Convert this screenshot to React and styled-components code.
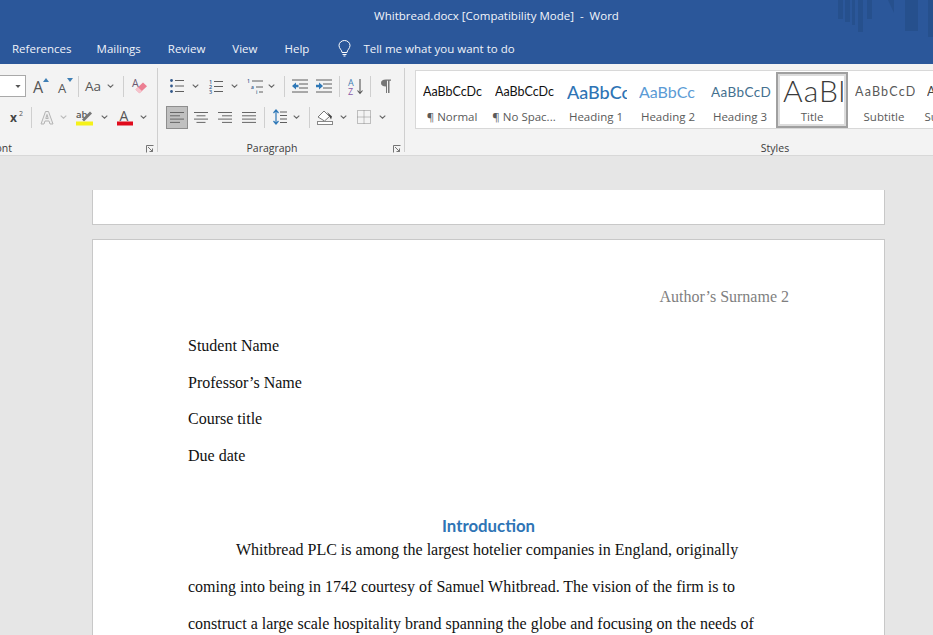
import React from "react";
import styled, { createGlobalStyle } from "styled-components";

const Global = createGlobalStyle`
  html, body { margin: 0; padding: 0; width: 933px; height: 635px; overflow: hidden; background: #e6e6e6; }
  #root { width: 933px; height: 635px; overflow: hidden; }
  * { box-sizing: border-box; }
`;
const Shell = styled.div`
  width: 933px; height: 635px; overflow: hidden; display: flex; flex-direction: column;
  font-family: "Open Sans", "Noto Sans", sans-serif;
`;
const TitleBar = styled.div`
  position: relative; height: 33px; flex: none; background: #2b579a; color: #f2f5fa;
  display: flex; justify-content: center; align-items: center; font-size: 11.5px; padding: 0 0 2px 60px;
  white-space: pre;
`;
const Streaks = styled.svg`
  position: absolute; right: 0; top: 0; width: 95px; height: 38px; z-index: 2;
`;
const TabBar = styled.div`
  height: 31px; flex: none; background: #2b579a; color: #f0f3f9; display: flex; align-items: center;
  padding: 0 0 0 12px; font-size: 11.5px;
`;
const Tab = styled.span`
  margin-right: ${p => p.$mr}px; white-space: nowrap;
`;
const Ribbon = styled.div`
  height: 92px; flex: none; display: flex; overflow: hidden; background: #f3f3f3;
  border-bottom: 1px solid #d8d8d8; padding-top: 4px; color: #444;
`;
const Group = styled.div`
  flex: none; width: ${p => p.$w}px; height: 84px; padding-top: ${p => (p.$plain ? 0 : 6)}px; display: flex; flex-direction: column;
  border-right: ${p => (p.$plain ? "none" : "1px solid #cfcfcf")};
`;
const Row = styled.div`
  display: flex; align-items: center; height: 24px; margin-bottom: ${p => p.$mb || 0}px; flex: none;
`;
const Tool = styled.div`
  flex: none; margin-left: ${p => p.$ml || 0}px; width: ${p => p.$w}px; height: 24px;
  display: flex; align-items: center; justify-content: center;
  svg { display: block; overflow: visible; }
  font-family: "Open Sans", sans-serif;
`;
const Sep = styled.div`
  flex: none; margin-left: ${p => p.$ml}px; width: 1px; height: 21px; background: #cfcfcf;
`;
const Combo = styled.div`
  flex: none; width: 26px; height: 22px; background: #fff; border: 1px solid #a9a9a9; border-left: none;
  display: flex; align-items: center; justify-content: flex-end; padding-right: 4px;
`;
const ActiveTool = styled(Tool)`
  background: #c0c0c0; border: 1px solid #8e8e8e; height: 23px; width: 22px;
`;
const LabelRow = styled.div`
  margin-top: 14px; height: 10px; position: relative; display: flex; align-items: center; justify-content: ${p => p.$align || "center"};
  padding-right: ${p => p.$pr || 0}px;
  font-size: 10.5px; color: #3c3c3c; flex: none; white-space: nowrap;
`;
const FontLabel = styled.span`
  margin-left: -10px;
`;
const Launcher = styled.svg`
  position: absolute; right: 3px; top: 2px; width: 8px; height: 8px;
`;
const Gallery = styled.div`
  margin: 2px 0 0 10px; height: 59px; width: 730px; flex: none; background: #fff; border: 1px solid #d8d8d8;
  border-right: none; display: flex; padding-top: 1px;
`;
const StyleItem = styled.div`
  flex: none; width: 72px; height: 56px; padding: 3px 4px 0 6px; display: flex; flex-direction: column; align-items: center;
  overflow: hidden;
  ${p => p.$on && `border: 2px solid #a0a0a0; box-shadow: inset 0 0 0 2px #dcdcdc; padding: 1px 2px 0 4px;`}
`;
const Preview = styled.div`
  width: 60px; height: 33px; overflow: hidden; white-space: nowrap; display: flex; align-items: center;
  padding-bottom: ${p => p.$pb || 0}px;
  font-family: Lato, "Open Sans", sans-serif; font-size: ${p => p.$size}px; font-weight: ${p => p.$weight || 400};
  color: ${p => p.$color}; letter-spacing: ${p => p.$ls || 0}px;
`;
const StyleName = styled.div`
  font-size: 11.5px; color: #5a5a5a; height: 17px; line-height: 17px; white-space: nowrap; margin-left: -2px;
`;
const DocArea = styled.div`
  flex: 1; background: #e6e6e6; padding: 34px 0 0 92px; overflow: hidden;
`;
const PageEnd = styled.div`
  width: 793px; height: 35px; background: #fff; border: 1px solid #c8c8c8; border-top: none;
`;
const Page = styled.div`
  margin-top: 14px; width: 793px; height: 800px; background: #fff; border: 1px solid #c8c8c8; padding: 47px 95px 0 95px;
  font-family: "Liberation Serif", "Times New Roman", serif; font-size: 16px; color: #111;
`;
const RunHeader = styled.div`
  text-align: right; color: #7f7f7f; line-height: 20px; margin-bottom: 21px;
`;
const Line = styled.div`
  line-height: 36.67px; white-space: nowrap;
`;
const Heading = styled.div`
  margin-top: 45.5px; line-height: 12px; text-align: center; font-family: Lato, sans-serif; font-weight: 700; font-size: 16.8px; color: #2e74b5; white-space: nowrap;
`;
const Indented = styled(Line)`
  text-indent: 48px;
`;

const Chev = () => (
  <svg width="7" height="4" viewBox="0 0 7 4"><path d="M.7.6 3.5 3.2 6.3.6" fill="none" stroke="#666" strokeWidth="1.1" /></svg>
);
const L = ({ x1, x2, y, c = "#5f5f5f" }) => <line x1={x1} x2={x2} y1={y} y2={y} stroke={c} strokeWidth="1" />;
const Lines = ({ kind }) => {
  const r = {
    left: [[0, 14], [0, 10], [0, 14], [0, 10]],
    center: [[0, 14], [2.5, 11.5], [0, 14], [2.5, 11.5]],
    right: [[0, 14], [4, 14], [0, 14], [4, 14]],
    just: [[0, 14], [0, 14], [0, 14], [0, 14]],
  }[kind];
  return (
    <svg width="14" height="13" viewBox="0 0 14 13">
      {r.map((s, i) => <L key={i} x1={s[0]} x2={s[1]} y={1.5 + i * 3.3} c="#666" />)}
    </svg>
  );
};
const SvgT = ({ x, y, s, c = "#555", w = 400, f = "Open Sans", children }) => (
  <text x={x} y={y} fontSize={s} fill={c} fontWeight={w} fontFamily={f}>{children}</text>
);

const Launch = () => (
  <Launcher viewBox="0 0 8 8">
    <path d="M.5 7.500V.5H7.500M2 2 6.500 6.500M6.500 3.500V6.500H3.500" fill="none" stroke="#666" strokeWidth=".9" />
  </Launcher>
);

const styleItems = [
  { prev: "AaBbCcDc", size: 12.5, color: "#111", name: "¶ Normal" },
  { prev: "AaBbCcDc", size: 12.5, color: "#111", name: "¶ No Spac..." },
  { prev: "AaBbCc", size: 18, color: "#2e74b5", weight: 500, name: "Heading 1" },
  { prev: "AaBbCc", size: 16, color: "#5b9bd5", name: "Heading 2" },
  { prev: "AaBbCcD", size: 13.5, color: "#44708f", ls: 0.4, name: "Heading 3" },
  { prev: "AaBl", size: 30, color: "#3a3a3a", weight: 300, ls: 1, pb: 4, name: "Title", on: true },
  { prev: "AaBbCcD", size: 12.5, color: "#595959", ls: 1.2, name: "Subtitle" },
  { prev: "AaBbCcD", size: 12.5, color: "#444", name: "Subtle Em..." },
];

export default function App() {
  return (
    <Shell>
      <Global />
      <TitleBar>
        Whitbread.docx [Compatibility Mode]  -  Word
        <Streaks viewBox="0 0 95 38">
          <g fill="#21487f" opacity=".45">
            <rect x="0" y="0" width="5" height="19" />
            <rect x="7" y="0" width="5" height="22" />
            <rect x="14" y="0" width="3" height="25" />
            <rect x="20" y="0" width="5" height="32" />
            <rect x="29" y="0" width="5" height="19" />
            <path d="M50 0h6v13z" />
            <rect x="67" y="0" width="13" height="31" />
            <rect x="90" y="0" width="5" height="37" />
          </g>
        </Streaks>
      </TitleBar>
      <TabBar>
        <Tab $mr={25}>References</Tab>
        <Tab $mr={27}>Mailings</Tab>
        <Tab $mr={27}>Review</Tab>
        <Tab $mr={27}>View</Tab>
        <Tab $mr={29}>Help</Tab>
        <Tab $mr={12}>
          <svg width="13" height="17" viewBox="0 0 13 17" style={{ display: "block" }}>
            <path d="M4 12.5C4 10 1 8.6 1 5.5a5.5 5 0 0 1 11 0c0 3.100-3 4.500-3 7zM4.500 14.500h4M5.500 16h2" fill="none" stroke="#fff" strokeWidth="1" />
          </svg>
        </Tab>
        <Tab $mr={0}>Tell me what you want to do</Tab>
      </TabBar>
      <Ribbon>
        <Group $w={158}>
          <Row $mb={7}>
            <Combo><svg width="6" height="3" viewBox="0 0 7 4"><path d="M0 0h7L3.500 4z" fill="#555" /></svg></Combo>
            <Tool $ml={7} $w={17}>
              <svg width="17" height="18" viewBox="0 0 17 18"><SvgT x="0" y="16" s="16">A</SvgT><path d="M10 5h6l-3-4z" fill="#3f7fb5" /></svg>
            </Tool>
            <Tool $ml={8} $w={16}>
              <svg width="16" height="18" viewBox="0 0 16 18"><SvgT x="0" y="16" s="13">A</SvgT><path d="M9 1h6l-3 4z" fill="#3f7fb5" /></svg>
            </Tool>
            <Sep $ml={4} />
            <Tool $ml={6} $w={18}>
              <svg width="18" height="16" viewBox="0 0 18 16"><SvgT x="0" y="13" s="13.5">Aa</SvgT></svg>
            </Tool>
            <Tool $ml={4} $w={7}><Chev /></Tool>
            <Sep $ml={9} />
            <Tool $ml={8} $w={16}>
              <svg width="16" height="18" viewBox="0 0 16 18">
                <path d="M3.500 12.500 11 5.500l4 3.800-7.500 7z" fill="#ec7f92" />
                <path d="M3.500 12.500 6 10.200l4 3.800-2.500 2.300z" fill="#f6c3cc" />
                <SvgT x="0" y="9.500" s="10.500" c="#6b5a72">A</SvgT>
              </svg>
            </Tool>
          </Row>
          <Row>
            <Tool $ml={10} $w={14}>
              <svg width="14" height="14" viewBox="0 0 14 14"><SvgT x="0" y="12" s="12" w={700} c="#444">x</SvgT><SvgT x="9" y="6" s="7">2</SvgT></svg>
            </Tool>
            <Sep $ml={7} />
            <Tool $ml={8} $w={14}>
              <svg width="14" height="15" viewBox="0 0 14 15"><path d="M1 14 5.500 1.500h3L13 14h-3L9 11H5l-1 3zM5.800 8.500h2.400L7 4.500z" fill="#eee" stroke="#b4b4b4" strokeWidth="1" /></svg>
            </Tool>
            <Tool $ml={6} $w={7}><svg width="7" height="4" viewBox="0 0 7 4"><path d="M.7.6 3.500 3.200 6.300.6" fill="none" stroke="#bbb" strokeWidth="1.100" /></svg></Tool>
            <Tool $ml={9} $w={18}>
              <svg width="18" height="17" viewBox="0 0 18 17">
                <SvgT x="0" y="9" s="9.500" w={600}>ab</SvgT>
                <path d="m6 10.500 8-8 2 2-8 8z" fill="#777" />
                <rect x="0" y="12.500" width="17" height="4" fill="#f5f119" />
              </svg>
            </Tool>
            <Tool $ml={7} $w={7}><Chev /></Tool>
            <Tool $ml={9} $w={16}>
              <svg width="16" height="17" viewBox="0 0 16 17">
                <SvgT x="2.500" y="12" s="14">A</SvgT>
                <rect x="0" y="12.500" width="16" height="4" fill="#e00b1c" />
              </svg>
            </Tool>
            <Tool $ml={7} $w={7}><Chev /></Tool>
          </Row>
          <LabelRow $align="flex-start"><FontLabel>Font</FontLabel><Launch /></LabelRow>
        </Group>
        <Group $w={247}>
          <Row $mb={7}>
            <Tool $ml={12} $w={14}>
              <svg width="14" height="14" viewBox="0 0 14 14">
                {[1.5, 7, 12.5].map(y => <g key={y}><circle cx="1.500" cy={y} r="1.400" fill="#33588a" /><L x1={5} x2={14} y={y} /></g>)}
              </svg>
            </Tool>
            <Tool $ml={8} $w={7}><Chev /></Tool>
            <Tool $ml={10} $w={14}>
              <svg width="14" height="15" viewBox="0 0 14 15">
                {[["1", 5], ["2", 10], ["3", 15]].map(([t, y]) => <SvgT key={t} x="0" y={y} s="5.500" c="#33588a" w={600}>{t}</SvgT>)}
                {[2.500, 7.500, 12.500].map(y => <L key={y} x1={5} x2={14} y={y} />)}
              </svg>
            </Tool>
            <Tool $ml={8} $w={7}><Chev /></Tool>
            <Tool $ml={9} $w={16}>
              <svg width="16" height="15" viewBox="0 0 16 15">
                <SvgT x="0" y="4" s="5" c="#33588a" w={600}>1</SvgT>
                <SvgT x="4" y="10" s="5" c="#33588a" w={600}>a</SvgT>
                <SvgT x="9" y="15" s="5" c="#33588a" w={600}>i</SvgT>
                <L x1={5} x2={16} y={2} /><L x1={9} x2={16} y={8} /><L x1={12} x2={16} y={13} />
              </svg>
            </Tool>
            <Tool $ml={5} $w={7}><Chev /></Tool>
            <Sep $ml={9} />
            <Tool $ml={7} $w={16}>
              <svg width="16" height="14" viewBox="0 0 16 14">
                <L x1={0} x2={16} y={1} /><L x1={7} x2={16} y={5} /><L x1={7} x2={16} y={9} /><L x1={0} x2={16} y={13} />
                <path d="M0 7 4 3.500v2.300h2.500v2.400H4v2.300z" fill="#2f78b7" />
              </svg>
            </Tool>
            <Tool $ml={8} $w={16}>
              <svg width="16" height="14" viewBox="0 0 16 14">
                <L x1={0} x2={16} y={1} /><L x1={7} x2={16} y={5} /><L x1={7} x2={16} y={9} /><L x1={0} x2={16} y={13} />
                <path d="M7 7 3 3.500v2.300H0v2.400h3v2.300z" fill="#2f78b7" />
              </svg>
            </Tool>
            <Sep $ml={7} />
            <Tool $ml={8} $w={15}>
              <svg width="15" height="17" viewBox="0 0 15 17">
                <SvgT x="0" y="8" s="9" c="#3f7fb5">A</SvgT>
                <SvgT x="0" y="16.500" s="9" c="#8a5aa8">Z</SvgT>
                <path d="M12 1v14M9.500 12.500 12 15.500l2.500-3" fill="none" stroke="#555" strokeWidth="1.100" />
              </svg>
            </Tool>
            <Sep $ml={7} />
            <Tool $ml={10} $w={10}>
              <svg width="10" height="14" viewBox="0 0 10 14">
                <path d="M5 7.500C1.500 7.500 0 6 0 4s1.500-3.500 5-3.500h5v1.200H8.500V14H7V1.700H6V14H5z" fill="#777" />
              </svg>
            </Tool>
          </Row>
          <Row>
            <ActiveTool $ml={8} $w={22}><Lines kind="left" /></ActiveTool>
            <Tool $ml={6} $w={14}><Lines kind="center" /></Tool>
            <Tool $ml={10} $w={14}><Lines kind="right" /></Tool>
            <Tool $ml={10} $w={14}><Lines kind="just" /></Tool>
            <Sep $ml={8} />
            <Tool $ml={8} $w={14}>
              <svg width="14" height="16" viewBox="0 0 14 16">
                <path d="M3 1v14M.5 4 3 1l2.500 3M.5 12 3 15l2.500-3" fill="none" stroke="#2f78b7" strokeWidth="1.200" />
                <L x1={7} x2={14} y={3} /><L x1={7} x2={14} y={6.500} /><L x1={7} x2={14} y={10} /><L x1={7} x2={14} y={13.500} />
              </svg>
            </Tool>
            <Tool $ml={6} $w={7}><Chev /></Tool>
            <Sep $ml={9} />
            <Tool $ml={7} $w={16}>
              <svg width="16" height="16" viewBox="0 0 16 16">
                <path d="M1 8 7 2l5.500 5.500-5 4.500z" fill="#fff" stroke="#777" />
                <path d="m10 3 5 4.500-1 3z" fill="#444" />
                <rect x=".5" y="12.500" width="15" height="3" fill="#fff" stroke="#888" />
              </svg>
            </Tool>
            <Tool $ml={7} $w={7}><Chev /></Tool>
            <Tool $ml={10} $w={14}>
              <svg width="14" height="14" viewBox="0 0 14 14">
                <path d="M.5.500h13v13H.5zM7 .5v13M.5 7h13" fill="none" stroke="#888" strokeWidth="1" strokeDasharray="1 1" />
              </svg>
            </Tool>
            <Tool $ml={8} $w={7}><Chev /></Tool>
          </Row>
          <LabelRow $pr={18}>Paragraph<Launch /></LabelRow>
        </Group>
        <Group $w={740} $plain>
          <Gallery>
            {styleItems.map(s => (
              <StyleItem key={s.name} $on={s.on}>
                <Preview $size={s.size} $color={s.color} $weight={s.weight} $ls={s.ls} $pb={s.pb}>{s.prev}</Preview>
                <StyleName>{s.name}</StyleName>
              </StyleItem>
            ))}
          </Gallery>
          <LabelRow>Styles</LabelRow>
        </Group>
      </Ribbon>
      <DocArea>
        <PageEnd />
        <Page>
          <RunHeader>Author’s Surname 2</RunHeader>
          <Line>Student Name</Line>
          <Line>Professor’s Name</Line>
          <Line>Course title</Line>
          <Line>Due date</Line>
          <Heading>Introduction</Heading>
          <Indented>Whitbread PLC is among the largest hotelier companies in England, originally</Indented>
          <Line>coming into being in 1742 courtesy of Samuel Whitbread. The vision of the firm is to</Line>
          <Line>construct a large scale hospitality brand spanning the globe and focusing on the needs of</Line>
        </Page>
      </DocArea>
    </Shell>
  );
}
